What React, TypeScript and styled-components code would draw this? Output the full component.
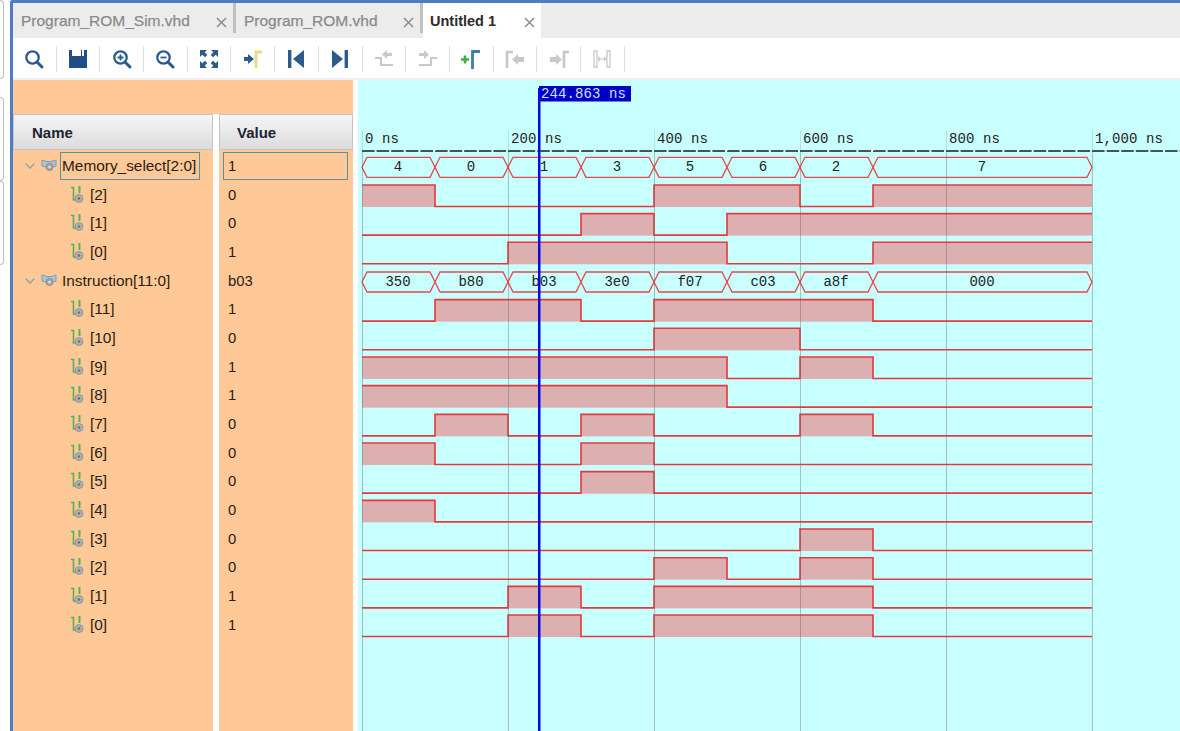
import React from 'react';
import styled, { createGlobalStyle } from 'styled-components';

const GlobalStyle = createGlobalStyle`
  html, body {
    margin: 0;
    height: 100%;
    overflow: hidden;
    background: #fff;
    font-family: "Liberation Sans", Arial, sans-serif;
  }
  * { box-sizing: border-box; }
`;

const Shell = styled.div`
  display: flex;
  width: 100%;
  height: 100vh;
  background: #fff;
`;

const SideRail = styled.div`
  width: 10px;
  flex: none;
  display: flex;
  flex-direction: column;
`;

const SideTab = styled.div<{ $height: number; $gap?: number }>`
  width: 4px;
  height: ${({ $height }) => $height}px;
  margin-top: ${({ $gap }) => $gap || 0}px;
  border: 1px solid #bdbdbd;
  border-left: none;
  border-radius: 0 5px 5px 0;
`;

const Frame = styled.div`
  flex: 1;
  min-width: 0;
  display: flex;
  flex-direction: column;
  border-left: 3px solid #4f7cc4;
  border-top: 3px solid #4f7cc4;
  border-top-left-radius: 3px;
`;

const TabBar = styled.div`
  height: 35px;
  flex: none;
  display: flex;
  background: #ececec;
`;

const Tab = styled.div<{ $width: number; $active?: boolean }>`
  width: ${({ $width }) => $width}px;
  display: flex;
  align-items: center;
  justify-content: space-between;
  padding: 0 6px 0 ${({ $active }) => ($active ? 7 : 8)}px;
  background: ${({ $active }) => ($active ? '#fff' : 'transparent')};
  color: ${({ $active }) => ($active ? '#2b2b2b' : '#8a8a8a')};
  font-size: ${({ $active }) => ($active ? 14.5 : 15.5)}px;
  font-weight: ${({ $active }) => ($active ? 700 : 400)};
  -webkit-text-stroke: ${({ $active }) => ($active ? 0 : 0.25)}px #8a8a8a;
`;

const TabClose = styled.span`
  width: 11px;
  height: 11px;
  margin-top: 3px;
  display: flex;
`;

const TabDivider = styled.div`
  width: 3px;
  height: 30px;
  flex: none;
  background: #bfbfbf;
`;

const Toolbar = styled.div`
  height: 42px;
  flex: none;
  display: flex;
  align-items: center;
  padding-top: 1px;
  background: #fff;
  border-bottom: 2px solid #eeeeee;
`;

const ToolButton = styled.div`
  width: 43.7px;
  height: 26px;
  flex: none;
  display: flex;
  align-items: center;
  justify-content: center;
  border-right: 1px solid #dfdfdf;
`;

const Body = styled.div`
  flex: 1;
  min-height: 0;
  display: flex;
  gap: 5px;
`;

const NamesPanel = styled.div`
  width: 340px;
  flex: none;
  display: flex;
  flex-direction: column;
`;

const TopStrip = styled.div`
  height: 34px;
  flex: none;
  background: #ffc997;
`;

const Columns = styled.div`
  flex: 1;
  display: grid;
  grid-template-columns: 200px 134px;
  column-gap: 6px;
`;

const Column = styled.div`
  display: flex;
  flex-direction: column;
  background: #ffc997;
`;

const HeaderCell = styled.div<{ $indent: number }>`
  height: 36px;
  flex: none;
  display: flex;
  align-items: center;
  padding: 1px 0 0 ${({ $indent }) => $indent}px;
  margin-bottom: 1.7px;
  background: linear-gradient(#f5f5f5, #dcdcdc);
  border: 1px solid #c4c4c4;
  color: #1c2430;
  font-size: 15px;
  font-weight: 700;
`;

const NameRow = styled.div<{ $leaf: boolean }>`
  height: 28.67px;
  flex: none;
  display: flex;
  align-items: center;
  padding-left: ${({ $leaf }) => ($leaf ? 57 : 11)}px;
  color: #2c1c10;
  font-size: 15.4px;
`;

const Chevron = styled.span`
  width: 12px;
  display: flex;
  margin-right: 5px;
`;

const SignalIcon = styled.span<{ $bus: boolean }>`
  width: ${({ $bus }) => ($bus ? 19 : 18)}px;
  flex: none;
  display: flex;
`;

const NameText = styled.span<{ $focused: boolean }>`
  display: flex;
  align-items: center;
  height: 28px;
  padding: 0 3px 0 1px;
  white-space: nowrap;
  border: 1px solid ${({ $focused }) => ($focused ? '#5a8fa3' : 'transparent')};
`;

const ValueRow = styled.div<{ $focused: boolean }>`
  height: ${({ $focused }) => ($focused ? 28 : 28.67)}px;
  flex: none;
  display: flex;
  align-items: center;
  margin: 0 5px ${({ $focused }) => ($focused ? 0.67 : 0)}px 4px;
  padding-left: 4px;
  color: #2c1c10;
  font-size: 14.8px;
  border: 1px solid ${({ $focused }) => ($focused ? '#5a8fa3' : 'transparent')};
`;

const WavePanel = styled.div`
  flex: 1;
  min-width: 0;
  background: #c8ffff;
`;

const WaveChart = styled.svg`
  display: block;
  width: 822px;
  height: 651px;
`;

const RulerLabel = styled.text`
  font-family: "Liberation Mono", "Courier New", monospace;
  font-size: 14px;
  letter-spacing: 0.1px;
  fill: #222;
`;

const BusValue = styled.text`
  font-family: "Liberation Mono", "Courier New", monospace;
  font-size: 14px;
  fill: #222;
  text-anchor: middle;
`;

const CursorLabel = styled.text`
  font-family: "Liberation Mono", "Courier New", monospace;
  font-size: 14px;
  letter-spacing: 0.1px;
  fill: #cfe0ff;
`;

const NAVY = '#2b5b8c';
const GRAY = '#c8c8c8';

type IconProps = { children: React.ReactNode };
const Glyph = ({ children }: IconProps) => (
  <svg width="24" height="24" viewBox="0 0 24 24" fill="none">
    {children}
  </svg>
);

const Lens = () => (
  <>
    <circle cx="10.5" cy="10.5" r="6.2" stroke={NAVY} strokeWidth="2.3" />
    <path d="M15 15l5 5" stroke={NAVY} strokeWidth="3" strokeLinecap="round" />
  </>
);

const toolIcons: React.ReactNode[] = [
  <Lens key="search" />,
  <path key="save" d="M3 3h3v6h9V3h1v6h2V3h3v18H3z" fill="#1f4f86" />,
  <g key="zoomin">
    <Lens />
    <path d="M7.5 10.5h6M10.5 7.5v6" stroke={NAVY} strokeWidth="1.8" />
  </g>,
  <g key="zoomout">
    <Lens />
    <path d="M7.5 10.5h6" stroke={NAVY} strokeWidth="1.8" />
  </g>,
  <g key="fit" fill={NAVY}>
    <path d="M3 3h7l-2.3 2.3 2.6 2.6-2.4 2.4-2.6-2.6L3 10z" />
    <path d="M21 3h-7l2.3 2.3-2.6 2.6 2.4 2.4 2.6-2.6L21 10z" />
    <path d="M3 21h7l-2.3-2.3 2.6-2.6-2.4-2.4-2.6 2.6L3 14z" />
    <path d="M21 21h-7l2.3-2.3-2.6-2.6 2.4-2.4 2.6 2.6L21 14z" />
  </g>,
  <g key="cursor">
    <path d="M3 10h4V7l6 5-6 5v-3H3z" fill="#2b5b8c" />
    <path d="M15 21V5h6" stroke="#ecd98a" strokeWidth="3" />
  </g>,
  <g key="first" fill={NAVY}>
    <rect x="4" y="3" width="3.4" height="18" />
    <path d="M20 3v18L9 12z" />
  </g>,
  <g key="last" fill={NAVY}>
    <rect x="16.6" y="3" width="3.4" height="18" />
    <path d="M4 3v18l11-9z" />
  </g>,
  <g key="prevedge">
    <path d="M3 11h6v7h12" stroke={GRAY} strokeWidth="2" />
    <path d="M20 6h-5V3l-5 4.5 5 4.5V9h5z" fill={GRAY} />
  </g>,
  <g key="nextedge">
    <path d="M3 18h12v-7h6" stroke={GRAY} strokeWidth="2" />
    <path d="M3 6h5V3l5 4.5L8 12V9H3z" fill={GRAY} />
  </g>,
  <g key="addmarker">
    <path d="M2 12.5h8M6 8.5v8" stroke="#3fae49" strokeWidth="2.6" />
    <path d="M13.5 22V4.5H21" stroke="#3b7fb0" strokeWidth="2.8" />
  </g>,
  <g key="prevmarker">
    <path d="M4 21V5h6" stroke={GRAY} strokeWidth="2.6" />
    <path d="M21 10h-6V7l-6 5.5 6 5.5v-3h6z" fill={GRAY} />
  </g>,
  <g key="nextmarker">
    <path d="M3 10h6V7l6 5.5-6 5.5v-3H3z" fill={GRAY} />
    <path d="M17 21V5h5" stroke={GRAY} strokeWidth="2.6" />
  </g>,
  <g key="swap" stroke={GRAY}>
    <path d="M4 4h3v16H4z" strokeWidth="1.3" />
    <path d="M20 4h-3v16h3z" strokeWidth="1.3" />
    <path d="M8 12h8M10 10l-2 2 2 2M14 10l2 2-2 2" strokeWidth="1.1" />
  </g>,
];

const CloseIcon = () => (
  <svg width="11" height="11" viewBox="0 0 11 11">
    <path d="M1 1l9 9M10 1l-9 9" stroke="#8d8d8d" strokeWidth="1.5" />
  </svg>
);

const ChevronIcon = () => (
  <svg width="12" height="12" viewBox="0 0 12 12">
    <path d="M1.5 3.5L6 8l4.5-4.5" fill="none" stroke="#93a0a6" strokeWidth="1.3" />
  </svg>
);

const BusIcon = () => (
  <svg width="17" height="16" viewBox="0 0 17 16">
    <path d="M1 2l5 1.5h4L15 2v6l-3 1H5L1 8z" fill="#a9c4d6" stroke="#7d9db3" strokeWidth="1" />
    <circle cx="8.5" cy="9" r="3.5" fill="#a8a8a8" stroke="#808080" strokeWidth="0.8" />
    <circle cx="8.5" cy="9" r="1.2" fill="#e4e4e4" />
  </svg>
);

const BitIcon = () => (
  <svg width="16" height="18" viewBox="0 0 16 18">
    <path d="M1 1.5h2.500V14h3" fill="none" stroke="#55b05a" strokeWidth="1.6" />
    <path d="M9.5 0v7" stroke="#55b05a" strokeWidth="2" />
    <circle cx="9" cy="12.5" r="4" fill="#b0b0b0" stroke="#8c8c8c" strokeWidth="0.8" />
    <circle cx="9" cy="12.5" r="1.3" fill="#707070" />
  </svg>
);

const X0 = 362;
const STEP = 73;
const ROW_Y0 = 167.3;
const ROW_PITCH = 28.67;

const MEMORY = ['4', '0', '1', '3', '5', '6', '2', '7', '7', '7'];
const INSTRUCTION = ['350', 'b80', 'b03', '3e0', 'f07', 'c03', 'a8f', '000', '000', '000'];

const bitOf = (hex: string, bit: number) => (parseInt(hex, 16) >> bit) & 1;

type Row = { label: string; value: string; bus?: string[]; bit?: { word: string[]; index: number } };

const bitRows = (word: string[], width: number, current: string): Row[] =>
  Array.from({ length: width }, (_, i) => {
    const index = width - 1 - i;
    return { label: `[${index}]`, value: String(bitOf(current, index)), bit: { word, index } };
  });

const rows: Row[] = [
  { label: 'Memory_select[2:0]', value: '1', bus: MEMORY },
  ...bitRows(MEMORY, 3, '1'),
  { label: 'Instruction[11:0]', value: 'b03', bus: INSTRUCTION },
  ...bitRows(INSTRUCTION, 12, 'b03'),
];

const BusTrace = ({ values, center }: { values: string[]; center: number }) => {
  const runs: { v: string; from: number; to: number }[] = [];
  values.forEach((v, i) => {
    const last = runs[runs.length - 1];
    if (last && last.v === v) last.to = i + 1;
    else runs.push({ v, from: i, to: i + 1 });
  });
  const top = center - 10;
  const bottom = center + 10;
  return (
    <>
      {runs.map((r) => {
        const a = X0 + r.from * STEP;
        const b = X0 + r.to * STEP;
        return (
          <React.Fragment key={r.from}>
            <polygon
              points={`${a},${center} ${a + 5},${top} ${b - 5},${top} ${b},${center} ${b - 5},${bottom} ${a + 5},${bottom}`}
              fill="none"
              stroke="#e8474a"
              strokeWidth="1.3"
            />
            <BusValue x={(a + b) / 2 - 0.5} y={center + 4}>
              {r.v}
            </BusValue>
          </React.Fragment>
        );
      })}
    </>
  );
};

const BitTrace = ({ word, index, center }: { word: string[]; index: number; center: number }) => {
  const high = center - 11;
  const low = center + 10.5;
  const levels = word.map((w) => bitOf(w, index));
  const points = levels
    .map((l, i) => {
      const y = l ? high : low;
      return `${X0 + i * STEP},${y} ${X0 + (i + 1) * STEP},${y}`;
    })
    .join(' ');
  return (
    <>
      {levels.map((l, i) =>
        l ? <rect key={i} x={X0 + i * STEP} y={high} width={STEP} height={low - high + 0.5} fill="#dcafb1" /> : null,
      )}
      <polyline points={points} fill="none" stroke="#e8383c" strokeWidth="1.6" />
    </>
  );
};

const majors = [0, 200, 400, 600, 800, 1000];
const labels = ['0 ns', '200 ns', '400 ns', '600 ns', '800 ns', '1,000 ns'];

const App = () => {
  return (
    <Shell>
      <GlobalStyle />
      <SideRail>
        <SideTab $height={79} />
        <SideTab $height={84} $gap={18} />
        <SideTab $height={84} />
      </SideRail>
      <Frame>
        <TabBar>
          <Tab $width={220}>
            Program_ROM_Sim.vhd
            <TabClose>
              <CloseIcon />
            </TabClose>
          </Tab>
          <TabDivider />
          <Tab $width={184}>
            Program_ROM.vhd
            <TabClose>
              <CloseIcon />
            </TabClose>
          </Tab>
          <TabDivider />
          <Tab $width={118} $active>
            Untitled 1
            <TabClose>
              <CloseIcon />
            </TabClose>
          </Tab>
        </TabBar>
        <Toolbar>
          {toolIcons.map((icon, i) => (
            <ToolButton key={i}>
              <Glyph>{icon}</Glyph>
            </ToolButton>
          ))}
        </Toolbar>
        <Body>
          <NamesPanel>
            <TopStrip />
            <Columns>
              <Column>
                <HeaderCell $indent={18}>Name</HeaderCell>
                {rows.map((row, i) => (
                  <NameRow key={i} $leaf={!!row.bit}>
                    {row.bus && (
                      <Chevron>
                        <ChevronIcon />
                      </Chevron>
                    )}
                    <SignalIcon $bus={!!row.bus}>{row.bus ? <BusIcon /> : <BitIcon />}</SignalIcon>
                    <NameText $focused={i === 0}>{row.label}</NameText>
                  </NameRow>
                ))}
              </Column>
              <Column>
                <HeaderCell $indent={17}>Value</HeaderCell>
                {rows.map((row, i) => (
                  <ValueRow key={i} $focused={i === 0}>
                    {row.value}
                  </ValueRow>
                ))}
              </Column>
            </Columns>
          </NamesPanel>
          <WavePanel>
            <WaveChart viewBox="358 80 822 651">
              {labels.map((text, i) => (
                <RulerLabel key={text} x={X0 + 3 + i * 146} y={143}>
                  {text}
                </RulerLabel>
              ))}
              <path d={`M${X0} 151H1180`} stroke="#1c1c1c" strokeWidth="1.3" strokeDasharray="12.6 2" />
              {Array.from({ length: 5 }, (_, i) => (
                <path key={i} d={`M${X0 + STEP + i * 146} 145V151`} stroke="#eefcfc" strokeWidth="1" />
              ))}
              {majors.map((ns, i) => (
                <path key={ns} d={`M${X0 + i * 146 + 0.5} 131V150`} stroke="rgba(120,130,130,0.25)" strokeWidth="1" />
              ))}
              {rows.map((row, i) => {
                const center = ROW_Y0 + ROW_PITCH * i;
                if (row.bus) return <BusTrace key={i} values={row.bus} center={center} />;
                return <BitTrace key={i} word={row.bit!.word} index={row.bit!.index} center={center} />;
              })}
              {majors.map((ns, i) => (
                <path key={ns} d={`M${X0 + i * 146 + 0.5} 152V731`} stroke="rgba(100,100,100,0.4)" strokeWidth="1" />
              ))}
              <rect x="539" y="86" width="92" height="15.5" fill="#0000c4" />
              <CursorLabel x="541" y="98">
                244.863 ns
              </CursorLabel>
              <rect x="538" y="88" width="2.5" height="643" fill="#0a0ae0" />
            </WaveChart>
          </WavePanel>
        </Body>
      </Frame>
    </Shell>
  );
};

export default App;
